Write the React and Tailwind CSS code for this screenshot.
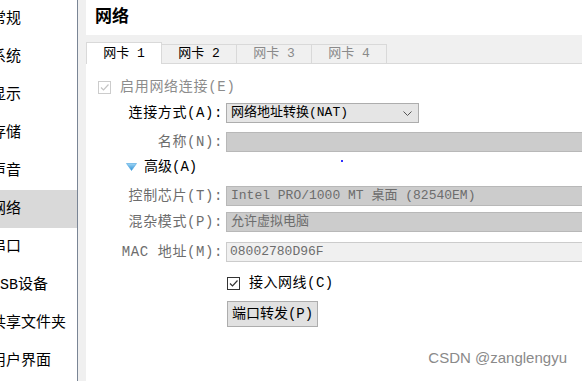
import React from "react";

const font = "font-['Liberation_Mono','Noto_Sans_CJK_SC',monospace]";

const sections = ["常规", "系统", "显示", "存储", "声音", "网络", "串口", "USB设备", "共享文件夹", "用户界面"];

function Sidebar() {
  return (
    <div className="w-[78px] shrink-0 bg-white border-r border-[#7a8595] overflow-hidden">
      {sections.map((s) => (
        <div
          key={s}
          className={`h-[38px] pt-[3px] flex items-center whitespace-nowrap text-[15px] text-black ${s === "网络" ? "bg-[#d9d9d9]" : ""}`}
        >
          <span className="-ml-[9px]">{s}</span>
        </div>
      ))}
    </div>
  );
}

function Tabs() {
  const tabs = [
    { label: "网卡 1", active: true },
    { label: "网卡 2" },
    { label: "网卡 3", disabled: true },
    { label: "网卡 4", disabled: true },
  ];
  return (
    <div className="h-[29px] bg-[#f0f0f0] flex items-end text-[13px]">
      {tabs.map((t) =>
        t.active ? (
          <div key={t.label} className="w-[76px] h-[22px] bg-white border border-b-0 border-[#d9d9d9] flex items-center justify-center text-black">
            {t.label}
          </div>
        ) : (
          <div
            key={t.label}
            className={`w-[75px] h-[20px] bg-[#f0f0f0] border-t border-r border-b border-[#d9d9d9] flex items-center justify-center ${t.disabled ? "text-[#8a8a8a]" : "text-black"}`}
          >
            {t.label}
          </div>
        )
      )}
      <div className="flex-1 border-b border-[#d9d9d9]" />
    </div>
  );
}

function Field({ label, dim, children, className = "" }) {
  return (
    <div className={`flex h-[20px] items-center ${className}`}>
      <div className={`w-[140px] shrink-0 text-right pr-[3px] whitespace-nowrap text-[14px] tracking-[0.6px] ${dim ? "text-[#6d6d6d]" : "text-black"}`}>
        {label}
      </div>
      {children}
    </div>
  );
}

function CheckMark({ color }) {
  return (
    <svg width="11" height="11" viewBox="0 0 11 11">
      <path d="M2 5.5 L4.5 8 L9.5 2.5" fill="none" stroke={color} strokeWidth="1.2" />
    </svg>
  );
}

export default function App() {
  return (
    <div className={`w-[582px] h-[381px] flex overflow-hidden bg-white ${font}`}>
      <Sidebar />
      <div className="w-[8px] shrink-0 bg-[#f0f0f0]" />
      <div className="flex-1 flex flex-col min-w-0">
        <div className="h-[35px] bg-white flex items-center pl-[9px] text-[17px] font-bold text-black">网络</div>
        <Tabs />
        <div className="relative flex-1 bg-white flex flex-col text-[13px] overflow-hidden">
          <div className="mt-[16px] h-[14px] flex items-center pl-[12px] text-[#8c8c8c]">
            <div className="w-[13px] h-[13px] border border-[#cccccc] bg-white flex items-center justify-center">
              <CheckMark color="#c4c4c4" />
            </div>
            <span className="ml-[9px] text-[14px] tracking-[0.7px]">启用网络连接(E)</span>
          </div>

          <Field label="连接方式(A):" className="mt-[9px]">
            <div className="w-[193px] h-[20px] bg-[#e5e5e5] border border-[#adadad] flex items-center pl-[4px] pr-[6px] text-black">
              <span className="flex-1 whitespace-nowrap">网络地址转换(NAT)</span>
              <svg width="9" height="5" viewBox="0 0 9 5">
                <path d="M0.5 0.5 L4.5 4.5 L8.5 0.5" fill="none" stroke="#555" strokeWidth="1" />
              </svg>
            </div>
          </Field>

          <Field label="名称(N):" dim className="mt-[9px]">
            <div className="flex-1 h-[20px] bg-[#cccccc] border-t border-b border-l border-[#b8b8b8]" />
          </Field>

          <div className="mt-[7px] h-[16px] flex items-center pl-[40px] text-black">
            <svg width="11" height="8" viewBox="0 0 11 8">
              <defs>
                <linearGradient id="tri" x1="0" y1="0" x2="0" y2="1">
                  <stop offset="0" stopColor="#9fd6f5" />
                  <stop offset="1" stopColor="#2d8fd4" />
                </linearGradient>
              </defs>
              <path d="M0.5 0.5 L10.5 0.5 L5.5 7.5 Z" fill="url(#tri)" stroke="#4aa3df" strokeWidth="0.6" />
            </svg>
            <span className="ml-[7px] text-[14px]">高级(A)</span>
          </div>

          <Field label="控制芯片(T):" dim className="mt-[11px]">
            <div className="flex-1 h-[20px] bg-[#cccccc] border-t border-b border-l border-[#b8b8b8] flex items-center pl-[4px] whitespace-nowrap text-[#6d6d6d]">
              Intel PRO/1000 MT 桌面 (82540EM)
            </div>
          </Field>

          <Field label="混杂模式(P):" dim className="mt-[6px]">
            <div className="flex-1 h-[20px] bg-[#cccccc] border-t border-b border-l border-[#b8b8b8] flex items-center pl-[4px] whitespace-nowrap text-[#6d6d6d]">
              允许虚拟电脑
            </div>
          </Field>

          <Field label="MAC 地址(M):" dim className="mt-[10px]">
            <div className="flex-1 h-[20px] bg-[#f0f0f0] border-t border-b border-l border-[#cccccc] flex items-center pl-[3px] whitespace-nowrap text-[#6d6d6d]">
              08002780D96F
            </div>
          </Field>

          <div className="mt-[14px] h-[14px] flex items-center pl-[141px] text-black">
            <div className="w-[13px] h-[13px] border border-[#333333] bg-white flex items-center justify-center">
              <CheckMark color="#333333" />
            </div>
            <span className="ml-[9px] text-[14px] tracking-[0.5px]">接入网线(C)</span>
          </div>

          <div className="mt-[11px] pl-[141px]">
            <div className="w-[91px] h-[26px] bg-[#e1e1e1] border border-[#adadad] flex items-center justify-center text-black text-[14px]">
              端口转发(P)
            </div>
          </div>

          <div className="absolute left-[255px] top-[96px] w-[2px] h-[2px] bg-[#3030ff]" />
          <div className="absolute right-[15px] bottom-[12px] text-[15px] text-[#8a8a8a] font-['Liberation_Sans',sans-serif] whitespace-nowrap">
            CSDN @zanglengyu
          </div>
        </div>
      </div>
    </div>
  );
}
